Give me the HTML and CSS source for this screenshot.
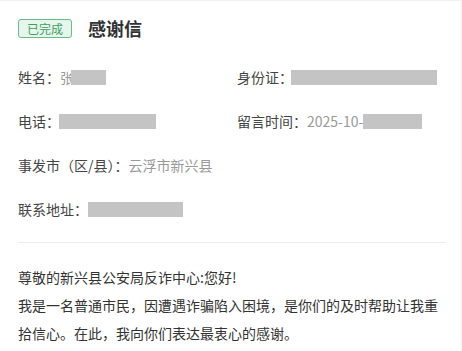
FILE: index.html
```html
<!DOCTYPE html>
<html lang="zh-CN">
<head>
    <meta charset="UTF-8">
    <meta name="viewport" content="width=device-width, initial-scale=1.0">
    <title>感谢信</title>
    <link rel="stylesheet" href="styles.css">
</head>
<body>
    <div class="letter">
        <header class="letter-head">
            <span class="tag">已完成</span>
            <h1>感谢信</h1>
        </header>

        <div class="info">
            <div class="item">姓名：<span class="value">张</span><span class="mask w35"></span></div>
            <div class="item">身份证：<span class="mask w146"></span></div>
            <div class="item">电话：<span class="mask w97"></span></div>
            <div class="item">留言时间：<span class="value">2025-10-</span><span class="mask w59"></span></div>
            <div class="item full">事发市（区/县）：<span class="value">云浮市新兴县</span></div>
            <div class="item full">联系地址：<span class="mask w95"></span></div>
        </div>

        <div class="content">
            <p>尊敬的新兴县公安局反诈中心:您好!</p>
            <p>我是一名普通市民，因遭遇诈骗陷入困境，是你们的及时帮助让我重拾信心。在此，我向你们表达最衷心的感谢。</p>
        </div>
    </div>
</body>
</html>
```

FILE: styles.css
```css
body {
    margin: 0;
    padding: 0;
    background-color: #fff;
    font-family: "Microsoft YaHei", "Noto Sans CJK SC", sans-serif;
    color: #333;
}
.letter {
    height: 350px;
    padding: 17px 15px 0 18px;
    border-top: 1px solid #f0f0f0;
    border-right: 1px solid #fbeff0;
    overflow: hidden;
}
.letter-head {
    display: flex;
    align-items: center;
    gap: 16px;
    height: 20px;
}
.tag {
    display: inline-block;
    height: 17px;
    line-height: 17px;
    padding: 0 8px;
    font-size: 12px;
    color: #3c9f61;
    background-color: #e7f6ec;
    border: 1px solid #66bd86;
    border-radius: 3px;
}
h1 {
    margin: 0;
    font-size: 18px;
    font-weight: bold;
    color: #303133;
    line-height: 20px;
}
.info {
    display: grid;
    grid-template-columns: 219px 1fr;
    row-gap: 22px;
    margin-top: 28px;
    font-size: 14px;
    line-height: 22px;
    color: #444;
}
.item {
    display: flex;
    align-items: center;
    white-space: nowrap;
}
.item.full {
    grid-column: 1 / 3;
}
.value {
    color: #999;
}
.mask {
    display: inline-block;
    height: 15px;
    background-color: #c4c4c4;
}
.w35 { width: 35px; margin-left: -3px; }
.w146 { width: 146px; margin-left: -2px; }
.w97 { width: 97px; margin-left: -1px; }
.w59 { width: 59px; }
.w95 { width: 95px; }
.content {
    margin-top: 22px;
    padding-top: 20px;
    border-top: 1px solid #eee;
    font-size: 14px;
    line-height: 28px;
    color: #333;
}
.content p {
    margin: 0;
}
```
